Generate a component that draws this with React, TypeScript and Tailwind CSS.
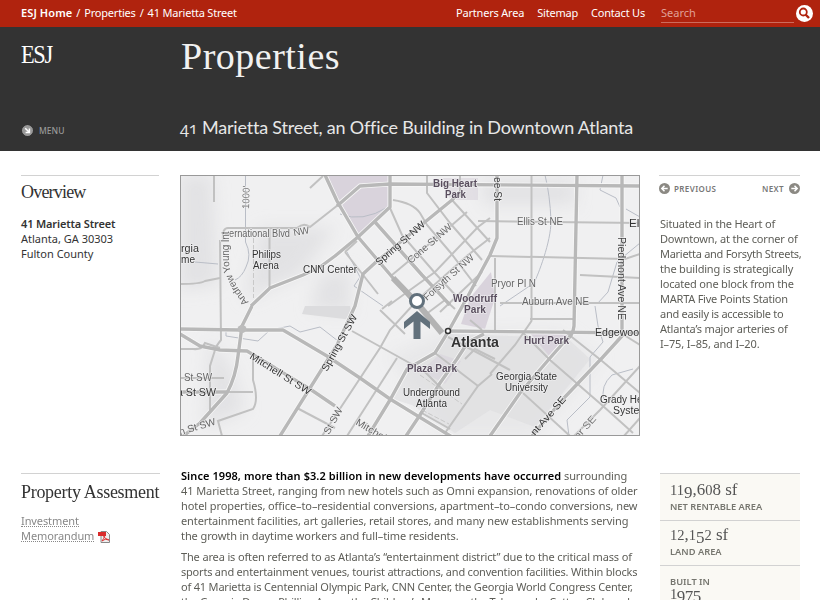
import React from "react";

const minorRoads = [
  "M214 175V202", "M223 240Q222 228 228 228H297Q304 222 310 227L338 205", "M269.500 228V288",
  "M220 240L221 340Q216 346 215 350L210 366V413", "M180 284Q200 284 205 281L220 278",
  "M310 188L323 176", "M345 252L378 294M345 252L357 241", "M390 208L402 235L435 273L458 298",
  "M393 200Q413 203 420 213L427 225L450 252L476 286", "M427 175V193L450 223L482 260",
  "M452 200L490 242", "M460 175V197", "M392 275L452 225L467 212", "M388 306L410 290L435 272L478 227L490 218",
  "M415 302L468 255L490 238", "M440 312L482 272", "M478 221L640 223", "M490 256L625 259L640 254",
  "M531.500 175V321L515 345L490 374", "M530 319H573", "M580 275L640 278", "M500 303H640", "M495 258V330",
  "M563 330L602 361L640 393", "M523 333L550 360L603 406L633 433", "M523 393L570 436",
  "M640 366L600 410L574 436", "M624 436L640 418", "M624 335L640 345",
  "M180 349H193Q202 350 205 343L220 348", "M253 360V380Q259 400 253 409L218 421L222 436",
  "M180 378H224", "M227 392H253", "M297 408L335 428", "M347 436L397 358", "M322 436L380 348L390 330L412 306",
  "M352 331L415 366", "M380 310L405 334M382 309L392 301M412 306L420 300",
  "M435 353L478 386", "M445 433L478 386L492 374", "M448 337L510 370", "M465 359L475 349L495 359",
  "M420 412L450 429M424 371L448 395", "M470 320L482 330M425 315L445 300L455 309"
];
const mainRoads = [
  "M251 306L270 288L303 275L320 267L335 256L358 237L390 207V175",
  "M325 175L337 201L358 237L393 278L417 306", "M337 206L360 186L390 184L640 186",
  "M280 436L337 345L355 306L363 274L376 262L425 222L452 200L462 190",
  "M375 222L422 275L450 305", "M497 175V238L490 255L468 296L448 332L435 353L407 369L390 400L368 436",
  "M577 175L574 326Q573 336 565 341L550 358L520 393L490 436", "M622 175V336L602 358L563 399L532 436",
  "M448 331L640 333", "M180 329L240 330H283L327 356L360 378L390 399L452 437",
  "M180 334L200 346L220 350L247 351L310 389L335 406", "M252 306L242 326L238 356Q236 376 227 393L200 423L182 437",
  "M180 392H227", "M406 436L420 415L440 383L457 359L468 342L484 334"
];
const streams = [
  "M245.500 175V242Q252 255 246 267Q242 277 235 280", "M195 262L218 264", "M545 175Q550 195 551 221C551 242 538 275 534 283L500 306",
  "M603 175L600 190L616 198L620 207M626 209L640 217", "M640 243L617 262L608 292L597 304",
  "M595 306L598 326L603 342L590 357V397L567 420L569 436", "M633 369L612 375Q600 386 604 400",
  "M226 331V336L258 341L270 330L290 326L300 332L320 327L338 341", "M340 214Q362 223 388 207", "M347 252L360 277L354 286L383 306"
];

type Label = { t: string; x: number; y: number; w: number; r?: number; s?: number; c?: string; b?: boolean };
const labels: Label[] = [
  { t: "Big Heart", x: 433, y: 187, w: 44, c: "#594e5e", b: true },
  { t: "Park", x: 445, y: 198, w: 21, c: "#594e5e", b: true },
  { t: "ee St", x: 494, y: 177, w: 24, r: 90, c: "#444" },
  { t: "1000'", x: 249, y: 209, w: 23, r: -88, c: "#777" },
  { t: "ernational Blvd", x: 229, y: 237, w: 61, c: "#666" },
  { t: "NW", x: 294, y: 236, w: 16, r: -10, c: "#666" },
  { t: "rgia", x: 181, y: 252, w: 18 }, { t: "me", x: 181, y: 263, w: 14 },
  { t: "Philips", x: 252, y: 258, w: 29 }, { t: "Arena", x: 253, y: 269, w: 26 },
  { t: "CNN Center", x: 303, y: 273, w: 54 },
  { t: "Spring St NW", x: 379, y: 266, w: 62, r: -41, c: "#333" },
  { t: "Cone St NW", x: 411, y: 264, w: 55, r: -41, c: "#666" },
  { t: "Forsyth St NW", x: 427, y: 301, w: 64, r: -42, c: "#666" },
  { t: "Ellis St NE", x: 517, y: 225, w: 46, c: "#666" }, { t: "Ell", x: 629, y: 227, w: 13 },
  { t: "Pryor Pl N", x: 491, y: 287, w: 45, c: "#666" },
  { t: "Auburn Ave NE", x: 522, y: 305, w: 67, c: "#666" },
  { t: "Piedmont Ave NE", x: 618, y: 237, w: 83, r: 90, c: "#444" },
  { t: "Woodruff", x: 453, y: 302, w: 44, c: "#594e5e", b: true }, { t: "Park", x: 464, y: 313, w: 22, c: "#594e5e", b: true },
  { t: "Spring St SW", x: 327, y: 372, w: 63, r: -61, c: "#333" },
  { t: "Mitchell St SW", x: 249, y: 358, w: 70, r: 32, c: "#333" },
  { t: "St SW", x: 184, y: 381, w: 28, c: "#666" }, { t: "a St SW", x: 177, y: 396, w: 39, c: "#333" },
  { t: "in St SW", x: 178, y: 436, w: 40, r: -17, c: "#666" },
  { t: "St SW", x: 329, y: 435, w: 29, r: -61, c: "#666" },
  { t: "Mitchell", x: 355, y: 424, w: 36, r: 31, c: "#666" },
  { t: "Atlanta", x: 451, y: 347, w: 48, s: 14, b: true },
  { t: "Hurt Park", x: 524, y: 344, w: 45, c: "#594e5e", b: true },
  { t: "Plaza Park", x: 407, y: 372, w: 50, c: "#594e5e", b: true },
  { t: "Underground", x: 403, y: 396, w: 57 }, { t: "Atlanta", x: 416, y: 407, w: 31 },
  { t: "Edgewood", x: 595, y: 336, w: 50 },
  { t: "Georgia State", x: 496, y: 380, w: 61 }, { t: "University", x: 505, y: 391, w: 43 },
  { t: "Grady Hea", x: 600, y: 403, w: 48 }, { t: "System", x: 613, y: 414, w: 35 },
  { t: "nt Ave SE", x: 535, y: 436, w: 48, r: -49, c: "#333" },
  { t: "or SE", x: 578, y: 440, w: 28, r: -48, c: "#777" }
];

function CityMap() {
  return (
    <svg viewBox="180 175 460 261" className="block h-[261px] w-[460px]" fontFamily="'Liberation Sans', Arial, sans-serif">
      <defs>
        <filter id="terrain" x="-20%" y="-20%" width="140%" height="140%"><feGaussianBlur stdDeviation="8" /></filter>
        <path id="young" d="M249 302Q231 282 229 263V226" />
      </defs>
      <rect x="180" y="175" width="460" height="261" fill="#f0f0f1" />
      <g filter="url(#terrain)" fill="#e2e2e4">
        <path d="M180 175H212L218 285L180 290Z" /><path d="M260 228H335L300 275L245 300Z" />
        <path d="M320 275L350 270V312L310 310Z" /><path d="M390 355L448 331L560 330L600 360L535 436H445Z" opacity=".6" />
        <path d="M210 340L230 365L245 410L205 428Z" /><path d="M480 180H575V205H485Z" />
      </g>
      <g fill="#dcdcde"><path d="M305 306H350L353 320L302 314Z" />
        <path d="M448 334L567 338L590 359L535 427L490 410L455 433L412 405L390 398L408 370L435 353Z" opacity=".5" /></g>
      <g fill="#d9d3dc"><path d="M326 175H390V208L359 234L337 201Z" /><path d="M443 178H478V200H450Z" opacity=".6" /><path d="M491 272L470 298L461 324L485 329L495 298Z" /><path d="M530 333H570L550 357Z" /><path d="M421 371L440 354L461 361L445 384Z" opacity=".6" /></g>
      <g fill="none" stroke="#b9bdc6" strokeWidth="1">{streams.map((d) => <path key={d} d={d} />)}</g>
      <g fill="none" stroke="#f7f7f7" strokeWidth="5">{mainRoads.map((d) => <path key={d} d={d} />)}</g>
      <g fill="none" stroke="#c1c1c1" strokeWidth="2">{minorRoads.map((d) => <path key={d} d={d} />)}</g>
      <g fill="none" stroke="#b8b8b8" strokeWidth="3.400" strokeLinejoin="round">{mainRoads.map((d) => <path key={d} d={d} />)}</g>
      <path d="M253.500 238V298M420 375L462 404M422 410L449 424" fill="none" stroke="#c8c8c8" strokeDasharray="5 2" />
      <path d="M393 278L417 303L442 333" fill="none" stroke="#b3b3b3" strokeWidth="6" />
      <ellipse cx="242" cy="329" rx="4.500" ry="4" fill="#bcbcbc" />
      <g stroke="#f2f2f3" strokeOpacity=".7" strokeWidth="1.500" paintOrder="stroke" strokeLinejoin="round">
        {labels.map((l) => (
          <text key={l.t + l.x} x={l.x} y={l.y} fontSize={l.s ?? 10} fontWeight={l.b ? 700 : 400} fill={l.c ?? "#333"}
            textLength={l.w} lengthAdjust="spacingAndGlyphs" transform={l.r ? `rotate(${l.r} ${l.x} ${l.y})` : undefined}>{l.t}</text>
        ))}
        <text fontSize="10" fill="#666"><textPath href="#young" textLength="76">Andrew Young Int</textPath></text>
      </g>
      <circle cx="448" cy="331" r="2.500" fill="#fff" stroke="#333" strokeWidth="1.500" />
      <circle cx="417" cy="301" r="6.500" fill="#fff" stroke="#62717c" strokeWidth="3" />
      <path d="M417 311L430 322V329L420.500 321.500V339H413.500V321.500L404 329V322Z" fill="#62717c" />
      <rect x="180.500" y="175.500" width="459" height="260" fill="none" stroke="#999" />
    </svg>
  );
}

function ArrowIcon({ className }: { className: string }) {
  return <svg viewBox="0 0 11 11" className={className}><circle cx="5.500" cy="5.500" r="5.500" fill="currentColor" /><path d="M2.300 5.500H8M5.500 2.800L8.200 5.500L5.500 8.200" fill="none" stroke="#fff" strokeWidth="1.500" /></svg>;
}

function PdfIcon() {
  return <svg viewBox="0 0 12 12" className="ml-1 inline-block h-3 w-3"><path d="M3 .5H8.500L11.500 3.500V11.500H3Z" fill="#eee" stroke="#888" /><path d="M0 1H8V5H0Z" fill="#d92b2b" /><path d="M4 10Q8 4 6 5T11 9Q7 7 4 10" fill="none" stroke="#d33" /></svg>;
}

/* Text figures: 0-2 sit at x-height, 3/4/5/7/9 hang below the baseline. */
function Figures({ value }: { value: string }) {
  return (
    <>
      {value.split(/([012]+|[34579]+)/).map((run, i) => (
        <span key={i} className={/[012]/.test(run) ? "text-[14.5px]" : /[34579]/.test(run) ? "relative top-[3px]" : undefined}>{run}</span>
      ))}
    </>
  );
}

type Line = [string, string];
const Lines = ({ lines }: { lines: Line[] }) => <>{lines.map(([t, tracking]) => <span key={t} className={`block ${tracking}`}>{t}</span>)}</>;

const areaLines: Line[] = [
  ["41 Marietta Street, ranging from new hotels such as Omni expansion, renovations of older", "tracking-[-0.092px]"],
  ["hotel properties, office–to–residential conversions, apartment–to–condo conversions, new", "tracking-[-0.09px]"],
  ["entertainment facilities, art galleries, retail stores, and many new establishments serving", "tracking-[-0.11px]"],
  ["the growth in daytime workers and full–time residents.", "tracking-[-0.093px]"]
];
const districtLines: Line[] = [
  ["The area is often referred to as Atlanta’s “entertainment district” due to the critical mass of", "tracking-[-0.147px]"],
  ["sports and entertainment venues, tourist attractions, and convention facilities. Within blocks", "tracking-[-0.213px]"],
  ["of 41 Marietta is Centennial Olympic Park, CNN Center, the Georgia World Congress Center,", "tracking-[-0.19px]"],
  ["the Georgia Dome, Phillips Arena, the Children’s Museum, the Tabernacle, Cotton Club and", "tracking-[-0.2px]"]
];
const situated: Line[] = [
  ["Situated in the Heart of", "tracking-[-0.22px]"],
  ["Downtown, at the corner of", "tracking-[-0.16px]"],
  ["Marietta and Forsyth Streets,", "tracking-[-0.28px]"],
  ["the building is strategically", "tracking-[-0.18px]"],
  ["located one block from the", "tracking-[-0.18px]"],
  ["MARTA Five Points Station", "tracking-[-0.24px]"],
  ["and easily is accessible to", "tracking-[-0.28px]"],
  ["Atlanta’s major arteries of", "tracking-[-0.2px]"],
  ["I–75, I–85, and I–20.", "tracking-[-0.15px]"]
];

export default function App() {
  return (
    <div className="h-[600px] w-[820px] overflow-hidden bg-white font-['Noto_Sans','Open_Sans',sans-serif] text-[11px] leading-[15px] text-[#5e5e58]">
      <nav className="flex h-[27px] items-center bg-[#b0230e] pb-0.5 pl-[21px] text-white">
        <div className="flex flex-1 gap-1 tracking-[-0.2px]"><b className="font-semibold tracking-[0.1px]">ESJ Home</b><span>/</span><span>Properties</span><span>/</span><span>41 Marietta Street</span></div>
        <div className="flex gap-[13px] tracking-[-0.2px]"><a>Partners Area</a><a>Sitemap</a><a>Contact Us</a></div>
        <input placeholder="Search" className="mt-0.5 ml-4 h-[18px] w-[133px] border-b border-[#cd6b5c] bg-transparent pb-0.5 outline-none placeholder:text-[#e0a096]" />
        <svg viewBox="0 0 17 17" className="mt-0.5 mr-[7px] ml-0.5 h-[17px] w-[17px]"><circle cx="8.500" cy="8.500" r="8.500" fill="#fff" /><circle cx="7.300" cy="7" r="3.500" fill="none" stroke="#b0230e" strokeWidth="1.800" /><path d="M9.500 9.500L13 13" stroke="#b0230e" strokeWidth="2.400" /></svg>
      </nav>
      <header className="flex h-[124px] bg-[#333]">
        <div className="flex w-[180px] flex-col justify-between pt-[15px] pb-[13px] pl-[21px]">
          <div className="origin-left scale-x-[0.86] font-['Liberation_Serif',serif] text-[26px] leading-[26px] tracking-[-1.5px] text-white">ESJ</div>
          <div className="ml-px flex items-center gap-1.5 text-[8.5px] font-medium text-[#999]"><ArrowIcon className="h-[11px] w-[11px] rotate-45 text-[#999]" />MENU</div>
        </div>
        <div className="flex-1">
          <h1 className="mt-[7px] ml-px font-['Liberation_Serif',serif] text-[38px] leading-[44px] tracking-[0.5px] text-[#f1f1f1]">Properties</h1>
          <h2 className="mt-[36px] font-['Lato',sans-serif] text-[18px] leading-[26px] tracking-[-0.2px] whitespace-nowrap text-[#e7e7e7]"><span className="font-['Open_Sans',sans-serif] text-[16.5px] oldstyle-nums">41</span> Marietta Street, an Office Building in Downtown Atlanta</h2>
        </div>
      </header>
      <main className="grid grid-cols-[140px_460px_142px] gap-x-5 pt-6 pl-5">
        <aside className="ml-px h-[298px] text-[#333]">
          <div className="h-px w-[138px] bg-[#d2d2d2]" />
          <h3 className="mt-[6px] font-['Liberation_Serif',serif] text-[18px] leading-5 tracking-[-0.8px]">Overview</h3>
          <address className="mt-[14px] not-italic"><b className="font-semibold tracking-[-0.15px]">41 Marietta Street</b><br />Atlanta, GA 30303<br />Fulton County</address>
        </aside>
        <CityMap />
        <aside>
          <div className="-ml-px h-px w-[141px] bg-[#d2d2d2]" />
          <div className="mt-[5px] -ml-px flex w-[141px] items-center text-[8px] font-semibold tracking-[0.4px] text-[#777]">
            <ArrowIcon className="mr-1 h-[11px] w-[11px] rotate-180 text-[#8b8983]" />PREVIOUS<span className="ml-auto">NEXT</span><ArrowIcon className="ml-[5px] h-[11px] w-[11px] text-[#8b8983]" />
          </div>
          <p className="mt-[20px] whitespace-nowrap"><Lines lines={situated} /></p>
        </aside>
        <aside className="ml-px">
          <div className="h-px w-[139px] bg-[#d2d2d2]" />
          <h3 className="mt-[8px] font-['Liberation_Serif',serif] text-[18px] leading-5 tracking-[-0.3px] whitespace-nowrap text-[#333]">Property Assesment</h3>
          <p className="mt-[11px] tracking-[-0.1px] text-[#888]"><a className="inline-block h-[14px] border-b border-dotted border-[#888]">Investment</a><br /><a className="inline-block h-[14px] border-b border-dotted border-[#888]">Memorandum</a><PdfIcon /></p>
        </aside>
        <article className="-mt-[5px] pl-px whitespace-nowrap">
          <p><b className="font-semibold tracking-[0.07px] text-black">Since 1998, more than $3.2 billion in new developments have occurred</b><span className="tracking-[-0.1px]"> surrounding</span><Lines lines={areaLines} /></p>
          <p className="mt-[6px]"><Lines lines={districtLines} /></p>
        </article>
        <aside className="w-[140px] bg-[#faf9f4] text-[9.3px] font-semibold text-[#76766f]">
          <div className="h-[47px] border-t border-[#d2d2d2] pt-[7px] pl-[10px]"><div className="h-[18px] font-['Liberation_Serif',serif] text-[17px] leading-[17px] font-normal text-[#555]"><Figures value="119,608 sf" /></div>NET RENTABLE AREA</div>
          <div className="h-[45px] border-t border-[#d2d2d2] pt-[5px] pl-[10px]"><div className="h-[18px] font-['Liberation_Serif',serif] text-[17px] leading-[17px] font-normal text-[#555]"><Figures value="12,152 sf" /></div>LAND AREA</div>
          <div className="h-[45px] border-t border-[#d2d2d2] pt-[8px] pl-[10px]">BUILT IN<div className="font-['Liberation_Serif',serif] text-[17px] leading-[10px] font-normal tracking-[-0.5px] text-[#555]"><Figures value="1975" /></div></div>
        </aside>
      </main>
    </div>
  );
}
